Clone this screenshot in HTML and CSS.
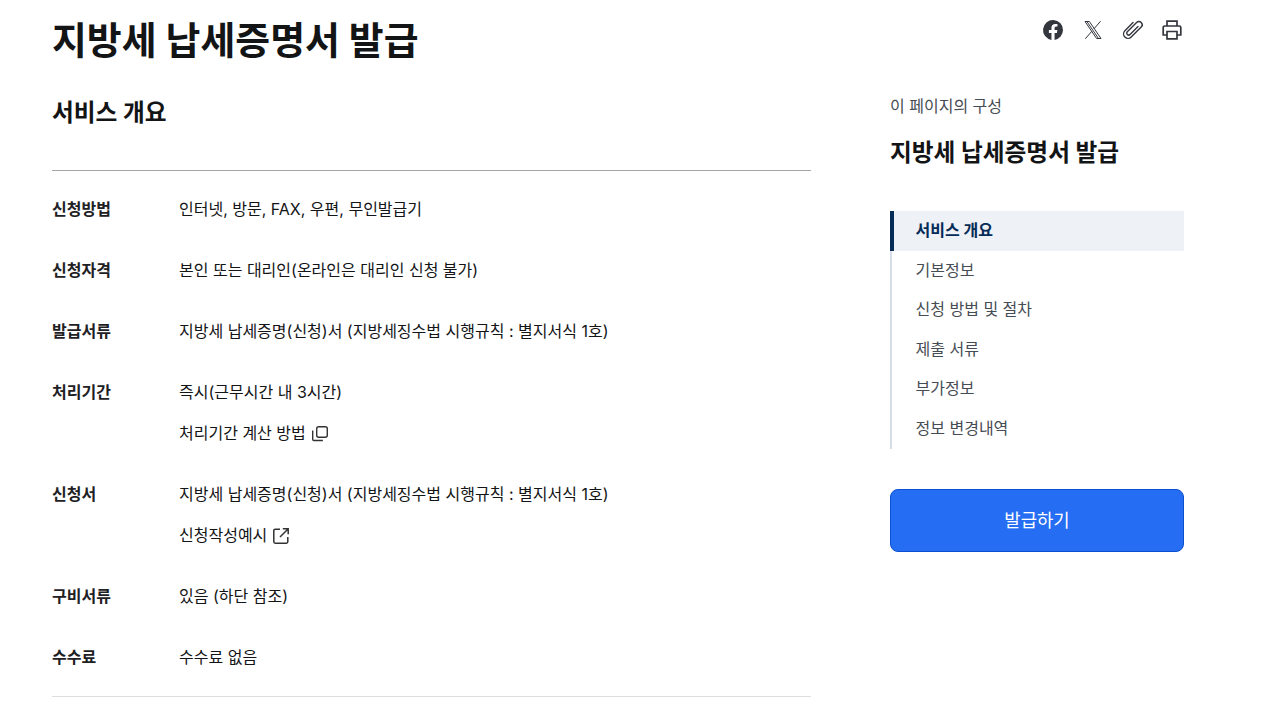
FILE: index.html
```html
<!DOCTYPE html>
<html lang="ko">
<head>
    <meta charset="UTF-8">
    <title>지방세 납세증명서 발급</title>
    <link rel="stylesheet" href="styles.css">
</head>
<body>
    <div class="page">
        <!-- Main column -->
        <main class="main">
            <h1>지방세 납세증명서 발급</h1>
            <h2>서비스 개요</h2>
            <dl class="info">
                <div class="row">
                    <dt>신청방법</dt>
                    <dd><p>인터넷, 방문, FAX, 우편, 무인발급기</p></dd>
                </div>
                <div class="row">
                    <dt>신청자격</dt>
                    <dd><p>본인 또는 대리인(온라인은 대리인 신청 불가)</p></dd>
                </div>
                <div class="row">
                    <dt>발급서류</dt>
                    <dd><p>지방세 납세증명(신청)서 (지방세징수법 시행규칙 : 별지서식 1호)</p></dd>
                </div>
                <div class="row">
                    <dt>처리기간</dt>
                    <dd>
                        <p>즉시(근무시간 내 3시간)</p>
                        <p class="link">처리기간 계산 방법
                            <svg class="copy" width="18" height="18" viewBox="0 0 18 18" fill="none" stroke="#333" stroke-width="1.4">
                                <rect x="5.7" y="2.7" width="10.6" height="10.6" rx="2"/>
                                <path d="M1.7 6.5v8.8a1.2 1.2 0 0 0 1.2 1.2h9"/>
                            </svg>
                        </p>
                    </dd>
                </div>
                <div class="row">
                    <dt>신청서</dt>
                    <dd>
                        <p>지방세 납세증명(신청)서 (지방세징수법 시행규칙 : 별지서식 1호)</p>
                        <p class="link">신청작성예시
                            <svg width="18" height="18" viewBox="0 0 18 18" fill="none" stroke="#333" stroke-width="1.5">
                                <path d="M8 2.2H3.2a1.4 1.4 0 0 0-1.4 1.4v11.2a1.4 1.4 0 0 0 1.4 1.4h11.2a1.4 1.4 0 0 0 1.4-1.4V10"/>
                                <path d="M10.8 1.8h5.4v5.4M16 2 8 10"/>
                            </svg>
                        </p>
                    </dd>
                </div>
                <div class="row">
                    <dt>구비서류</dt>
                    <dd><p>있음 (하단 참조)</p></dd>
                </div>
                <div class="row">
                    <dt>수수료</dt>
                    <dd><p>수수료 없음</p></dd>
                </div>
            </dl>
        </main>

        <!-- Right side -->
        <aside class="side">
            <div class="share">
                <svg width="24" height="24" viewBox="0 0 24 24">
                    <path fill="#33363d" d="M22 12a10 10 0 1 0-11.56 9.88v-6.99H7.9V12h2.54V9.8c0-2.5 1.49-3.89 3.78-3.89 1.09 0 2.24.2 2.24.2v2.46h-1.26c-1.24 0-1.63.77-1.63 1.56V12h2.78l-.45 2.89h-2.33v6.99A10 10 0 0 0 22 12z"/>
                </svg>
                <svg width="24" height="24" viewBox="0 0 24 24" fill="none" stroke="#33363d" stroke-width="1">
                    <path d="M4 3.5h4.4l11.6 17h-4.4z"/>
                    <path d="M5.9 3.5l11.6 17M19.6 3.2l-6.8 7.8M10.9 13.2l-6.6 7.6"/>
                </svg>
                <svg width="24" height="24" viewBox="0 0 24 24" fill="none" stroke="#33363d" stroke-width="1.4" stroke-linecap="round">
                    <path d="M17 8.5l-8 8a1.9 1.9 0 0 1-2.7-2.7l9.3-9.3a3.2 3.2 0 0 1 4.6 4.6l-10 10a4.4 4.4 0 0 1-6.3-6.3L12 4.5"/>
                </svg>
                <svg class="print" width="24" height="24" viewBox="0 0 24 24" fill="none" stroke="#33363d" stroke-width="1.7">
                    <path d="M7 8V3.2h10V8"/>
                    <path d="M7 17H3.2V9.5A1.5 1.5 0 0 1 4.7 8h14.6a1.5 1.5 0 0 1 1.5 1.5V17H17"/>
                    <path d="M7 13.5h10v7.3H7z"/>
                </svg>
            </div>
            <p class="toc-label">이 페이지의 구성</p>
            <p class="toc-title">지방세 납세증명서 발급</p>
            <ul class="toc">
                <li class="active">서비스 개요</li>
                <li>기본정보</li>
                <li>신청 방법 및 절차</li>
                <li>제출 서류</li>
                <li>부가정보</li>
                <li>정보 변경내역</li>
            </ul>
            <button class="issue-btn">발급하기</button>
        </aside>
    </div>
</body>
</html>
```

FILE: styles.css
```css
/* Global styles */
html, body {
    margin: 0;
    height: 718px;
    overflow: hidden;
    background-color: #fff;
}

body {
    font-family: 'Inter', 'Noto Sans CJK KR', 'Noto Sans', sans-serif;
    color: #1e2124;
}

.page {
    display: flex;
    padding: 0 96px 0 52px;
}

/* Main column */
.main {
    width: 759px;
    margin-right: 79px;
}

h1 {
    margin: 0;
    padding-top: 12px;
    font-size: 37.9px;
    line-height: 56px;
    font-weight: 700;
    color: #131416;
}

h2 {
    margin: 0;
    padding-top: 27px;
    height: 102px;
    box-sizing: border-box;
    font-size: 23.7px;
    line-height: 36px;
    font-weight: 700;
    color: #131416;
}

.info {
    margin: 0;
    padding: 14px 0 2px;
    border-top: 1px solid #a3a5a8;
    border-bottom: 1px solid #dcdee0;
}

.row {
    display: flex;
    padding: 8px 0 21px;
}

.row dt {
    width: 127px;
    font-size: 16px;
    line-height: 32px;
    font-weight: 700;
}

.row dd {
    margin: 0;
    flex: 1;
}

.row p {
    margin: 0;
    font-size: 16px;
    line-height: 32px;
    color: #131416;
}

.row p + p {
    margin-top: 9px;
}

.link svg {
    vertical-align: -4px;
}

.link .copy {
    margin-left: 1px;
    vertical-align: -3px;
}

/* Right side */
.side {
    width: 294px;
}

.share {
    display: flex;
    justify-content: flex-end;
    gap: 16px;
    padding-top: 18px;
    height: 52px;
}

.print {
    margin-left: -1px;
}

.toc-label {
    margin: 24px 0 0;
    font-size: 16px;
    line-height: 24px;
    color: #464c53;
}

.toc-title {
    margin: 17px 0 0;
    font-size: 23.7px;
    line-height: 36px;
    font-weight: 700;
    color: #131416;
}

.toc {
    list-style: none;
    margin: 40px 0 0;
    padding: 0;
    border-left: 2px solid #d6dde7;
}

.toc li {
    height: 39.6px;
    padding-left: 23.5px;
    font-size: 16px;
    line-height: 38px;
    color: #464c53;
}

.toc li.active {
    margin-left: -2px;
    padding-left: 21.5px;
    border-left: 4px solid #052b57;
    background-color: #eef1f6;
    font-weight: 700;
    color: #052b57;
}

.issue-btn {
    display: block;
    width: 100%;
    height: 63px;
    margin-top: 40px;
    padding-bottom: 3px;
    border: 1px solid #0b50d0;
    border-radius: 8px;
    background-color: #256ef4;
    color: #fff;
    font-family: inherit;
    font-size: 17.8px;
}
```
